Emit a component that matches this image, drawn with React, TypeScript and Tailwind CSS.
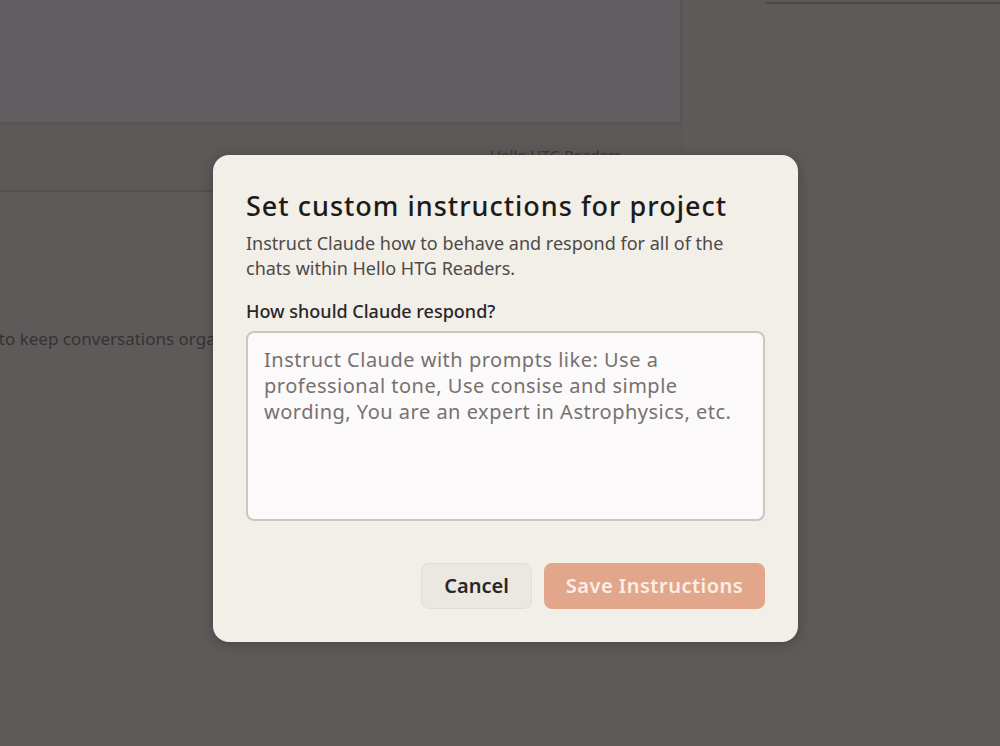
import React from 'react';

const font = { fontFamily: '"Noto Sans", "Open Sans", sans-serif' };

const Backdrop = () => {
  return (
    <div className="flex h-full w-full bg-[#5e5a5a]">
      <div className="flex w-[682px] flex-col">
        <div className="h-[124px] border-r-2 border-b-2 border-[#575357] bg-[#615e62]" />
        <div className="flex h-[68px] items-start justify-end border-b-2 border-[#535050] bg-[#5c5857] pr-3">
          <div className="h-[36px] w-[192px] border-b-2 border-[#4f4b4b] px-3 pt-[20px] text-[15px] text-[#3b3838]">
            Hello HTG Readers
          </div>
        </div>
        <div className="pt-[134px]">
          <p className="-ml-[104px] whitespace-nowrap text-[17px] text-[#363232]">
            Use projects to keep conversations organized
          </p>
        </div>
      </div>
      <div className="flex flex-1 flex-col">
        <div className="ml-[83px] mt-[2px] h-[2px] bg-[#4d4949]" />
      </div>
    </div>
  );
};

export default function App() {
  return (
    <div className="relative h-[746px] w-[1000px] overflow-hidden" style={font}>
      <Backdrop />
      <div className="absolute left-[213px] top-[155px] flex w-[585px] flex-col rounded-[16px] bg-[#f2eee8] px-[33px] pt-[34px] pb-[33px] shadow-[0_2px_12px_rgba(0,0,0,0.25)]">
        <h2 className="text-[27px] leading-[34px] font-medium tracking-[1px] text-[#1d1b19]">
          Set custom instructions for project
        </h2>
        <p className="mt-[8px] text-[18px] leading-[25px] text-[#4d4a47]">
          Instruct Claude how to behave and respond for all of the chats within Hello HTG Readers.
        </p>
        <label className="mt-[18px] text-[18px] leading-[24px] font-medium text-[#29262a]">
          How should Claude respond?
        </label>
        <textarea
          className="mt-[8px] h-[190px] w-full resize-none rounded-[8px] border-2 border-[#cbc6bf] bg-[#fbf9f9] px-[16px] py-[14px] text-[20px] leading-[26px] tracking-[0.5px] text-[#29262a] outline-none placeholder:text-[#77716f]"
          placeholder="Instruct Claude with prompts like: Use a professional tone, Use consise and simple wording, You are an expert in Astrophysics, etc."
        />
        <div className="mt-[42px] flex justify-end gap-[12px]">
          <button className="h-[46px] w-[111px] rounded-[8px] border border-[#e2ddd6] bg-[#ebe7e1] text-[20px] font-semibold text-[#29262a]">
            Cancel
          </button>
          <button className="h-[46px] w-[221px] rounded-[8px] bg-[#e2a68b] text-[20px] font-semibold tracking-[0.5px] text-[#fbeee6]">
            Save Instructions
          </button>
        </div>
      </div>
    </div>
  );
}
